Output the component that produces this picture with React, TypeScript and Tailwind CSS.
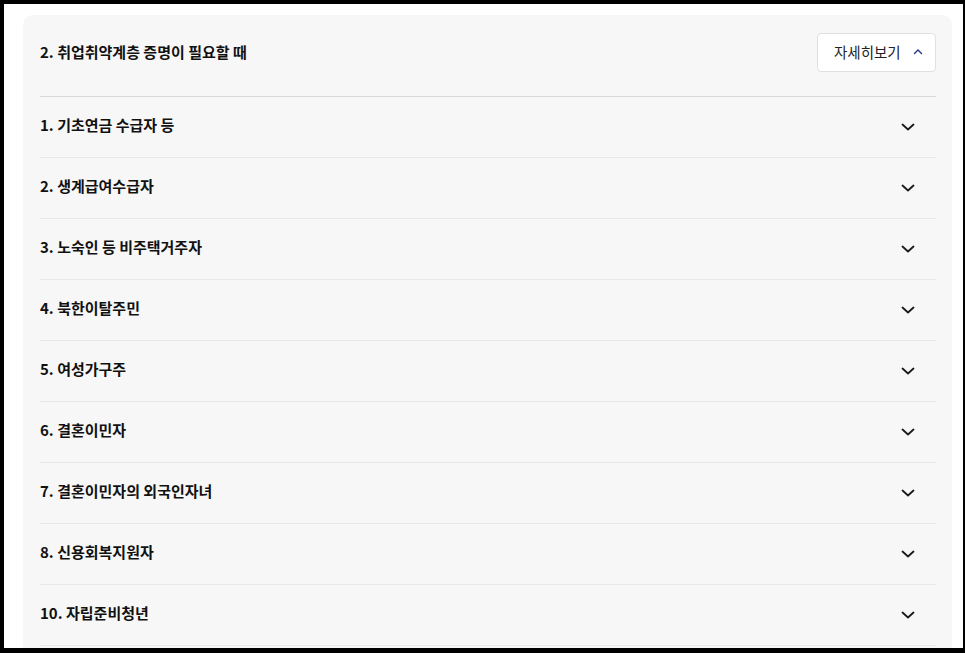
import React from "react";

const items = [
  "1. 기초연금 수급자 등",
  "2. 생계급여수급자",
  "3. 노숙인 등 비주택거주자",
  "4. 북한이탈주민",
  "5. 여성가구주",
  "6. 결혼이민자",
  "7. 결혼이민자의 외국인자녀",
  "8. 신용회복지원자",
  "10. 자립준비청년",
];

function ChevronDown() {
  return (
    <svg width="16" height="16" viewBox="0 0 16 16" fill="none">
      <path d="M2.5 5.5L8 10.5L13.5 5.5" stroke="#1a1a1a" strokeWidth="1.8" strokeLinecap="round" strokeLinejoin="round" />
    </svg>
  );
}

function ChevronUp() {
  return (
    <svg width="10" height="8" viewBox="0 0 10 8" fill="none">
      <path d="M1.5 5.5L5 2L8.5 5.5" stroke="#24348a" strokeWidth="1.4" strokeLinecap="round" strokeLinejoin="round" />
    </svg>
  );
}

export default function App() {
  return (
    <div
      className="w-[965px] h-[653px] bg-black pt-[4px] pl-[4px] pr-[2px] pb-[5px]"
      style={{ fontFamily: '"Noto Sans CJK KR", "Noto Sans", sans-serif' }}
    >
      <div className="w-full h-full bg-white overflow-hidden pl-[19px] pt-[11px] pr-[11px]">
        <div className="bg-[#f7f7f7] rounded-[10px] px-[17px] pr-[16px] pt-[18px] h-[700px]">
          <div className="flex items-center justify-between pb-[24px] border-b border-[#d9d9d9]">
            <div className="text-[15px] leading-[20px] pb-[2px] font-semibold text-[#111111]">2. 취업취약계층 증명이 필요할 때</div>
            <button className="h-[39px] w-[119px] bg-white border border-[#e0e0e0] rounded-[4px] flex items-center pl-[16px] gap-[12px] text-[14.5px] leading-[20px] pb-[2px] text-[#222222]">
              <span>자세히보기</span>
              <ChevronUp />
            </button>
          </div>
          {items.map((t) => (
            <div key={t} className="flex items-center justify-between h-[61px] border-b border-[#e8e8e8] pr-[20px]">
              <div className="text-[15px] leading-[20px] pb-[4px] font-semibold text-[#111111]">{t}</div>
              <ChevronDown />
            </div>
          ))}
        </div>
      </div>
    </div>
  );
}
